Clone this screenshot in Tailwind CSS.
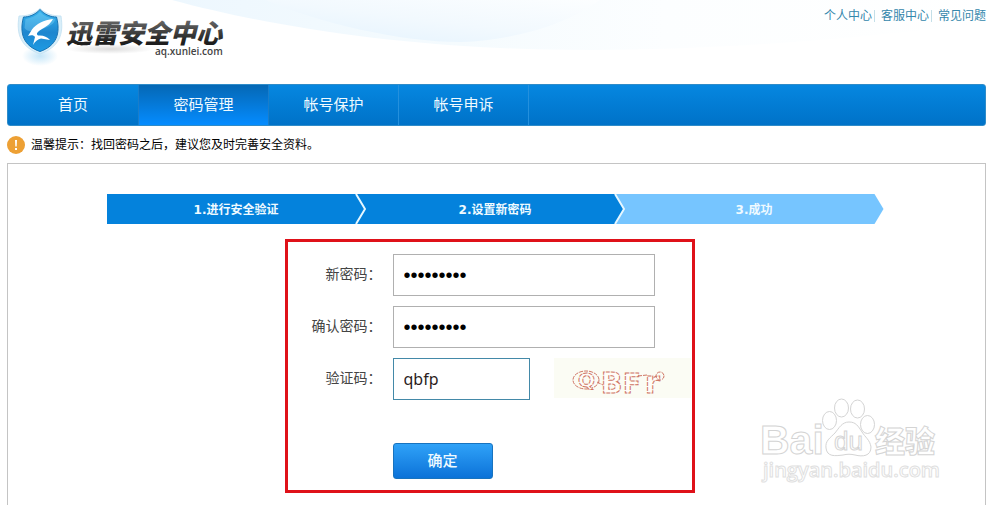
<!DOCTYPE html>
<html lang="zh-CN">
<head>
<meta charset="utf-8">
<meta name="viewport" content="width=device-width, initial-scale=1">
<title>迅雷安全中心</title>
<script src="https://cdn.jsdelivr.net/npm/@tailwindcss/browser@4"></script>
</head>
<body class="flex min-h-screen flex-col overflow-x-hidden bg-white px-[7px] font-['Liberation_Sans','Noto_Sans_CJK_SC',sans-serif] text-xs text-black">
<header class="relative -mx-[7px] flex h-[84px] justify-between pr-[7px] pl-4">
  <!-- decorative wave behind the header -->
  <svg class="absolute inset-0 -z-10 h-full w-full" viewBox="0 0 993 84" preserveAspectRatio="none" aria-hidden="true">
    <defs>
      <linearGradient id="w1" x1="0" x2="1"><stop offset="0" stop-color="#edf7fe"/><stop offset=".35" stop-color="#f5fbfe"/><stop offset=".6" stop-color="#fcfeff"/><stop offset="1" stop-color="#fff"/></linearGradient>
      <linearGradient id="w2" x1="0" y1="1" x2="1" y2="0"><stop offset="0" stop-color="#e2f2fe"/><stop offset=".5" stop-color="#f2f9fe"/><stop offset="1" stop-color="#fcfeff"/></linearGradient>
    </defs>
    <path d="M172 0C260 24 380 43 500 48C640 54 800 46 993 22V0Z" fill="url(#w1)"/>
    <path d="M265 0C320 23 400 42 460 42C520 40 570 22 600 0Z" fill="url(#w2)"/>
  </svg>
  <a href="#" aria-label="迅雷安全中心">
    <svg class="h-[72px] w-[212px]" viewBox="16 0 212 72">
      <defs>
        <linearGradient id="sh" x1="0" y1="0" x2="0" y2="1"><stop offset="0" stop-color="#38b5ee"/><stop offset=".55" stop-color="#1d86cf"/><stop offset="1" stop-color="#1d9be3"/></linearGradient>
        <linearGradient id="tx" x1="0" y1="0" x2="0" y2="1"><stop offset=".2" stop-color="#666"/><stop offset=".8" stop-color="#1e1e1e"/></linearGradient>
        <radialGradient id="gl"><stop offset="0" stop-color="#8ccdf2" stop-opacity=".5"/><stop offset="1" stop-color="#8ccdf2" stop-opacity="0"/></radialGradient>
        <radialGradient id="gr"><stop offset="0" stop-color="#888" stop-opacity=".3"/><stop offset="1" stop-color="#888" stop-opacity="0"/></radialGradient>
      </defs>
      <ellipse cx="40" cy="56" rx="18" ry="10" fill="url(#gl)"/>
      <path d="M40 8.500C34 14 27 16 19 16C16 35 21 47 40 54C59 47 64 35 61 16C53 16 46 14 40 8.500Z" fill="#d8eef9" stroke="#c0e0f1" stroke-width=".8"/>
      <path d="M40 9.500C35 15 29 17 23.500 17C19 34 24 46 40 51.500C56 46 61 34 56.500 17C51 17 45 15 40 9.500Z" fill="url(#sh)" stroke="#1873b3" stroke-width="1"/>
      <path d="M25.500 19C31 18 36 16 40 12C44 16 49 18 55 19C55 24 48 27 40 30C33 32 27 32 24.500 28Z" fill="#9be3ff" opacity=".3"/>
      <path d="M53 19C44 20 36 24 32 29.500L28 36C31 34.500 34 35 35 37L33 45C35.500 41 38 39 41 38.500L50 40C47 36.500 43 35 38 35.500C36 34 37 32.500 39 31C45 27 50 25 53 19Z" fill="#fff"/>
      <ellipse cx="110" cy="49" rx="44" ry="5" fill="url(#gr)"/>
      <text x="66" y="43" fill="url(#tx)" font-family="'Noto Sans CJK SC',sans-serif" font-size="26" font-weight="900" font-style="italic">迅雷安全中心</text>
      <text x="155" y="55" font-family="'Open Sans',sans-serif" font-size="10" font-weight="600" fill="#444">aq.xunlei.com</text>
    </svg>
  </a>
  <nav class="mt-2 flex h-4 items-center leading-4 text-[#3487ac]" aria-label="快捷链接">
    <a href="#" class="pr-[2px]">个人中心</a>
    <a href="#" class="relative pr-[2px] pl-[7px] before:absolute before:top-[2px] before:left-0 before:h-3 before:w-px before:bg-[#c4dfe8]">客服中心</a>
    <a href="#" class="relative pl-[7px] before:absolute before:top-[2px] before:left-0 before:h-3 before:w-px before:bg-[#c4dfe8]">常见问题</a>
  </nav>
</header>

<nav class="flex h-[42px] rounded-[3px] border border-[#2f8cc9] bg-linear-to-b from-[#0687e0] to-[#0072c8] text-[15px] text-[#effaff]" aria-label="主导航">
  <a href="#" class="flex w-[130px] items-center justify-center">首页</a>
  <a href="#" aria-current="page" class="flex w-[131px] items-center justify-center border-x border-[#1a7dca] bg-linear-to-b from-[#0568b5] to-[#058cff]">密码管理</a>
  <a href="#" class="flex w-[130px] items-center justify-center border-r border-[#2490dd]">帐号保护</a>
  <a href="#" class="flex w-[130px] items-center justify-center border-r border-[#2490dd]">帐号申诉</a>
</nav>

<p class="flex h-[37px] items-center gap-[6px]">
  <svg class="h-[18px] w-[18px]" viewBox="0 0 18 18" aria-hidden="true"><circle cx="9" cy="9" r="9" fill="#eda034"/><path d="M8 4h2l-.3 6.500h-1.400ZM8 12h2v2h-2Z" fill="#fff"/></svg>
  <span>温馨提示：找回密码之后，建议您及时完善安全资料。</span>
</p>

<main class="flex-1 border border-b-0 border-[#c4c4c4] pt-[30px]">
  <div class="mx-auto max-w-[780px] pr-[3px]">
    <ol class="grid h-[30px] grid-cols-3 text-center font-['DejaVu_Sans','Noto_Sans_CJK_SC',sans-serif] text-xs leading-8 font-bold text-[#effaff]">
      <li class="relative h-[30px] bg-[#0482dc]">1.进行安全验证
        <svg class="absolute top-0 right-0 h-[30px] w-3" viewBox="0 0 12 30" aria-hidden="true"><path d="M2 0L11 15L2 30" fill="none" stroke="#e6f7ff" stroke-width="2"/></svg>
      </li>
      <li class="relative h-[30px] bg-[#0482dc]">2.设置新密码
        <svg class="absolute top-0 right-0 h-[30px] w-3" viewBox="0 0 12 30" aria-hidden="true"><path d="M2 0L11 15L2 30H12V0Z" fill="#76c5ff"/><path d="M2 0L11 15L2 30" fill="none" stroke="#e6f7ff" stroke-width="2"/></svg>
      </li>
      <li class="h-[30px] bg-[#76c5ff] [clip-path:polygon(0_0,calc(100%-9px)_0,100%_50%,calc(100%-9px)_100%,0_100%)]">3.成功</li>
    </ol>

    <form class="mt-[15px] ml-[178px] flex w-[410px] flex-col gap-[10px] border-3 border-[#df1119] pt-3 pb-[11px] text-sm text-[#444]">
      <div class="flex gap-[11px]">
        <label for="pw" class="w-[94px] text-right leading-10">新密码：</label>
        <input id="pw" type="password" value="qbfp12345" class="h-[42px] w-[262px] border border-[#b0b0b0] px-[10px] font-['Liberation_Sans',sans-serif] text-xl text-black outline-none">
      </div>
      <div class="flex gap-[11px]">
        <label for="pw2" class="w-[94px] text-right leading-10">确认密码：</label>
        <input id="pw2" type="password" value="qbfp12345" class="h-[42px] w-[262px] border border-[#b0b0b0] px-[10px] font-['Liberation_Sans',sans-serif] text-xl text-black outline-none">
      </div>
      <div class="flex">
        <label for="code" class="mr-[11px] w-[94px] text-right leading-10">验证码：</label>
        <input id="code" type="text" value="qbfp" class="h-[42px] w-[137px] border border-[#4389a8] px-[10px] font-['Noto_Sans',sans-serif] text-base text-[#2b1c1c] outline-none">
        <svg class="ml-6 h-10 w-[137px] bg-[#fbfcf4]" viewBox="0 0 137 40" role="img" aria-label="QBFP">
          <g fill="#fffdf8" stroke="#cf7565" stroke-width="1" stroke-dasharray="4 1" font-family="'DejaVu Sans',sans-serif" font-weight="700">
            <ellipse cx="32" cy="22" rx="13" ry="9" fill="none"/>
            <text x="24" y="29" font-size="20">Q</text>
            <text x="47" y="35" font-size="28">B</text>
            <text x="69" y="35" font-size="26">F</text>
            <text x="91" y="35" font-size="30">r</text>
            <circle cx="106" cy="18" r="4" fill="none"/>
            <path d="M43 24L49 27M84 18L93 17" fill="none"/>
          </g>
        </svg>
      </div>
      <button type="submit" class="mt-[33px] ml-[105px] h-9 w-[100px] rounded-[3px] border border-[#1873bf] bg-linear-to-b from-[#2fa2f8] to-[#0b72d8] text-[15px] font-medium text-[#effaff]">确定</button>
    </form>
  </div>
</main>

<!-- watermark floating over the page corner -->
<svg class="pointer-events-none absolute top-[395px] right-[50px] h-[90px] w-[185px]" viewBox="0 0 185 90" role="img" aria-label="Baidu 经验 jingyan.baidu.com">
  <g fill="#fff" stroke="#d4d4d4" stroke-width="1">
    <text x="2" y="59" font-size="41" font-family="'Liberation Sans',sans-serif" font-weight="700">Bai</text>
    <ellipse cx="71.500" cy="25.500" rx="7" ry="9"/>
    <ellipse cx="83.500" cy="13" rx="7" ry="9"/>
    <ellipse cx="99.500" cy="14" rx="7" ry="9"/>
    <ellipse cx="109.500" cy="29.500" rx="7" ry="9"/>
    <path d="M91 27C84 27 81 33 77 38C72 43 67 46 68 53C69 62 77 61 85 60C89 59 93 59 97 60C105 62 113 61 113 52C112 45 107 42 104 37C100 31 98 27 91 27Z"/>
    <text x="76" y="55" font-family="'Liberation Sans',sans-serif" font-size="26">du</text>
    <text x="117" y="57" font-family="'Noto Sans CJK SC',sans-serif" font-size="30" font-weight="900">经验</text>
    <text x="5" y="82" font-family="'Open Sans',sans-serif" font-size="20" font-weight="600" stroke="#e0e0e0">jingyan.baidu.com</text>
  </g>
</svg>
</body>
</html>
